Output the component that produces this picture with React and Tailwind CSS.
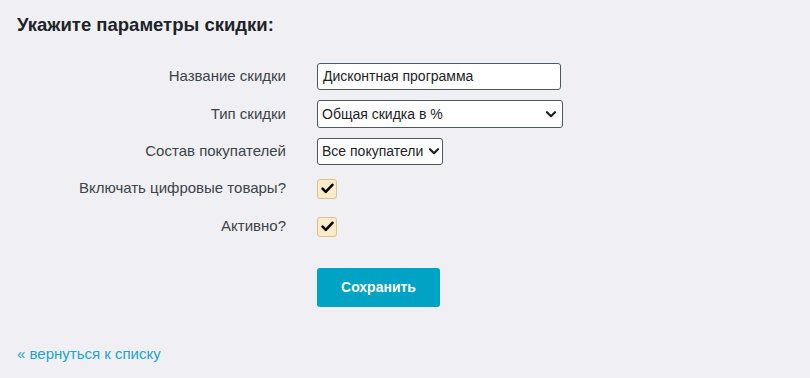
import React from "react";

const Chevron = () => (
  <svg width="10" height="7" viewBox="0 0 10 7" className="shrink-0">
    <path d="M1 1.2 L5 5.2 L9 1.2" fill="none" stroke="#1d2327" strokeWidth="2.2" strokeLinecap="round" strokeLinejoin="round" />
  </svg>
);

const Check = () => (
  <div className="w-[20px] h-[20px] rounded-[3px] border border-[#d7c393] bg-[#fbecc7] flex items-center justify-center">
    <svg width="13" height="11" viewBox="0 0 13 11">
      <path d="M1.6 5.6 L4.8 8.8 L11.4 1.8" fill="none" stroke="#000" strokeWidth="2.6" strokeLinecap="round" strokeLinejoin="round" />
    </svg>
  </div>
);

const Label = ({ children }) => (
  <div className="w-[286px] text-right text-[15px] text-[#3c434a]">{children}</div>
);

export default function App() {
  return (
    <div className="min-h-[378px] bg-[#f0f0f4] text-[#1d2327]" style={{ fontFamily: '"Liberation Sans", Arial, sans-serif' }}>
      <div className="pl-[17px] pt-[13px]">
        <h2 className="text-[18.5px] leading-[24px] font-bold text-[#1d2327]">Укажите параметры скидки:</h2>
      </div>
      <div className="mt-[20px] flex flex-col">
        <div className="flex items-center h-[38px] gap-[31px]">
          <Label>Название скидки</Label>
          <div className="w-[244px] h-[27px] rounded-[3px] border border-[#50575e] bg-white px-[5px] flex items-center text-[14px]">
            Дисконтная программа
          </div>
        </div>
        <div className="flex items-center h-[38px] gap-[31px]">
          <Label>Тип скидки</Label>
          <div className="w-[246px] h-[28px] rounded-[3px] border border-[#50575e] bg-white pl-[4px] pr-[6px] flex items-center justify-between text-[14px]">
            <span>Общая скидка в %</span>
            <Chevron />
          </div>
        </div>
        <div className="flex items-center h-[37px] gap-[31px]">
          <Label>Состав покупателей</Label>
          <div className="w-[126px] h-[27px] rounded-[3px] border border-[#50575e] bg-white pl-[4px] pr-[3px] flex items-center justify-between text-[14px]">
            <span>Все покупатели</span>
            <Chevron />
          </div>
        </div>
        <div className="flex items-center h-[37px] gap-[31px]">
          <Label>Включать цифровые товары?</Label>
          <Check />
        </div>
        <div className="flex items-center h-[39px] gap-[31px]">
          <Label>Активно?</Label>
          <Check />
        </div>
        <div className="mt-[22px] pl-[317px]">
          <button className="w-[123px] h-[39px] rounded-[3px] bg-[#00a3c4] text-white font-bold text-[14px]">
            Сохранить
          </button>
        </div>
        <div className="pl-[17px] mt-[35px]">
          <a href="#" className="text-[15px] leading-[17px] text-[#1aa5c9]">« вернуться к списку</a>
        </div>
      </div>
    </div>
  );
}
